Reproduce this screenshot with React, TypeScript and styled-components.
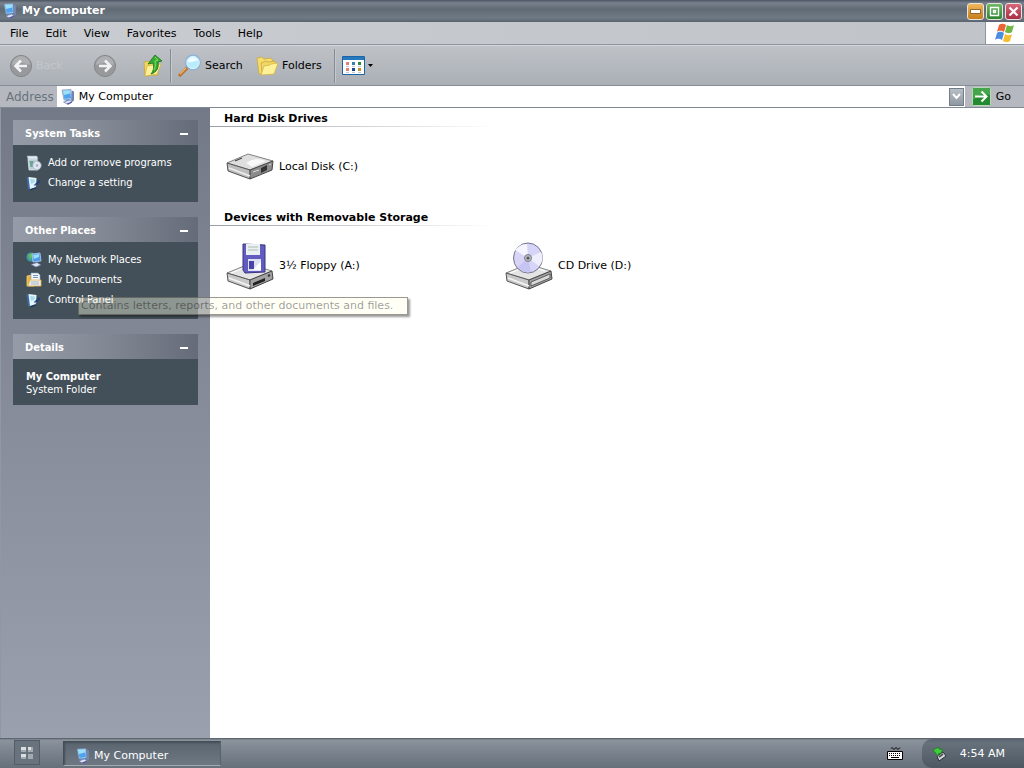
import { FC, ReactNode } from "react";
import styled, { createGlobalStyle } from "styled-components";

// types
interface IPanelLink {
  label: string;
  icon: ReactNode;
}

interface IDrive {
  label: string;
  icon: ReactNode;
}

// css
const GlobalStyle = createGlobalStyle`
  * {
    box-sizing: border-box;
  }
  body {
    margin: 0;
    font-family: Verdana, "DejaVu Sans", sans-serif;
    font-size: 11px;
    line-height: 14px;
    color: #000;
  }
  button, input {
    font: inherit;
    color: inherit;
  }
  button {
    background: none;
    border: 0;
    padding: 0;
  }
  svg {
    display: block;
    flex: none;
  }
`;

const Desktop = styled.div`
  display: flex;
  flex-direction: column;
  min-height: 100vh;
`;

const TitleBar = styled.header`
  align-items: center;
  background: linear-gradient(#4c5663, #78818c 3px, #606a75 9px, #707a84 18px, #596370);
  color: white;
  display: flex;
  height: 22px;
  padding: 0 2px 0 2px;
`;

const Title = styled.h1`
  flex: 1;
  font-size: 11px;
  margin: 0 0 0 4px;
`;

const WindowButton = styled.button<{ $from: string; $to: string }>`
  align-items: center;
  background: linear-gradient(${({ $from, $to }) => `${$from}, ${$to}`});
  border: 1px solid #e8e4dc;
  border-radius: 3px;
  display: flex;
  height: 17px;
  justify-content: center;
  margin-left: 2px;
  width: 17px;
`;

const MenuBar = styled.nav`
  background: linear-gradient(90deg, #c9ccd1, #c0c4c9);
  border-bottom: 1px solid #8d959e;
  display: flex;
  height: 23px;
`;

const Menus = styled.div`
  display: flex;
  flex: 1;
  gap: 1px;
  padding-left: 2px;
`;

const MenuItem = styled.button`
  padding: 1px 8px 0;
`;

const Brand = styled.div`
  align-items: center;
  background: white;
  border-left: 1px solid #8d959e;
  display: flex;
  justify-content: center;
  width: 39px;
`;

const ToolBar = styled.div`
  align-items: center;
  background: linear-gradient(#bfc3c8, #aaafb5);
  border-bottom: 1px solid #858e97;
  border-top: 1px solid #d3d6da;
  display: flex;
  height: 41px;
  padding: 0 9px;
`;

const ToolButton = styled.button<{ $width?: number }>`
  align-items: center;
  display: flex;
  gap: 3px;
  text-align: left;
  width: ${({ $width }) => ($width ? `${$width}px` : "auto")};

  &:disabled {
    color: #c3c7cb;
  }
`;

const Separator = styled.div`
  border-left: 1px solid #858c95;
  border-right: 1px solid #c5c9ce;
  height: 34px;
  margin: 0 6px 0 7px;
`;

const AddressBar = styled.form`
  align-items: center;
  background: #b5b9bf;
  border-bottom: 1px solid #808993;
  display: flex;
  height: 22px;
`;

const AddressLabel = styled.label`
  color: #69727d;
  font-size: 12px;
  padding: 0 3px 0 6px;
`;

const AddressField = styled.div`
  align-items: center;
  background: white;
  display: flex;
  flex: 1;
  gap: 3px;
  height: 21px;
  padding: 0 1px 0 3px;
`;

const AddressInput = styled.input`
  border: 0;
  flex: 1;
  min-width: 0;
  outline: 0;
  padding: 1px 0 0;
`;

const DropButton = styled.button`
  align-items: center;
  background: linear-gradient(#b8bec5, #8f98a2);
  border: 1px solid #737d88;
  display: flex;
  height: 18px;
  justify-content: center;
  width: 15px;
`;

const GoButton = styled.button`
  align-items: center;
  display: flex;
  gap: 5px;
  padding: 0 13px 0 7px;
`;

const Content = styled.div`
  display: flex;
  flex: 1;
`;

const SideBar = styled.aside`
  background: linear-gradient(#737986, #858b98 45%, #9aa0ae);
  border-left: 1px solid #9298a3;
  display: flex;
  flex: none;
  flex-direction: column;
  gap: 15px;
  padding: 12px;
  width: 210px;
`;

const Panel = styled.section`
  color: white;
  font-family: Tahoma, "DejaVu Sans Condensed", "DejaVu Sans", sans-serif;
`;

const PanelHeader = styled.header`
  align-items: center;
  background: linear-gradient(90deg, #969ca7, #858b96 45%, #656b78);
  display: flex;
  height: 25px;
  justify-content: space-between;
  padding: 2px 10px 0 12px;
`;

const PanelTitle = styled.h2`
  font-size: 11px;
  margin: 0;
`;

const Collapse = styled.button`
  background: white;
  height: 2px;
  width: 8px;
`;

const PanelBody = styled.div`
  background: #435059;
  padding: 8px 13px 9px;
  position: relative;
`;

const PanelLink = styled.a`
  align-items: center;
  color: inherit;
  display: flex;
  gap: 6px;
  height: 20px;
  text-decoration: none;
`;

const DetailText = styled.p`
  line-height: 13px;
  margin: 0;

  &:first-child {
    font-weight: bold;
    padding-top: 3px;
  }
`;

const Tooltip = styled.div`
  background: rgba(255, 255, 232, 0.4);
  border: 1px solid rgba(70, 70, 60, 0.55);
  box-shadow: 2px 2px 2px rgba(0, 0, 0, 0.4);
  color: rgba(0, 0, 0, 0.4);
  font-family: Verdana, "DejaVu Sans", sans-serif;
  height: 18px;
  left: 65px;
  line-height: 16px;
  min-width: 330px;
  padding: 0 2px;
  position: absolute;
  top: 55px;
  white-space: nowrap;
  z-index: 1;
`;

const Main = styled.main`
  background: white;
  flex: 1;
`;

const GroupTitle = styled.h2`
  font-size: 11px;
  height: 19px;
  line-height: 21px;
  margin: 0;
  padding-left: 14px;
  background: linear-gradient(90deg, #9a9fa7, white) bottom left / 285px 1px no-repeat;
`;

const DriveGrid = styled.div`
  display: grid;
  grid-template-columns: repeat(auto-fill, 279px);
  height: 80px;
  padding-left: 16px;
`;

const Drive = styled.button`
  align-items: center;
  display: flex;
  gap: 5px;
  text-align: left;
`;

const TaskBar = styled.footer`
  align-items: stretch;
  background: linear-gradient(#4e5863, #8b949c 2px, #7d8690 12px, #66707a);
  color: white;
  display: flex;
  height: 30px;
`;

const StartButton = styled.button`
  align-items: center;
  background: #69737d;
  border: 1px solid #525d67;
  display: flex;
  height: 25px;
  justify-content: center;
  margin: 2px 23px 0 14px;
  width: 26px;
`;

const TaskButton = styled.button`
  align-items: center;
  background: linear-gradient(#5b6570, #6e7882);
  border: 1px solid #444e58;
  border-bottom-color: #a4abb2;
  border-right-color: #59636e;
  box-shadow: inset 1px 1px 2px #444e58;
  display: flex;
  gap: 3px;
  height: 25px;
  margin-top: 3px;
  padding: 4px 11px 0;
  width: 158px;
`;

const Keyboard = styled.button`
  margin: 0 19px 0 auto;
`;

const Tray = styled.div`
  align-items: center;
  background: linear-gradient(#5b6571, #66717c 4px, #4d5863);
  border-radius: 10px 0 0 10px;
  display: flex;
  gap: 12px;
  margin-top: 1px;
  padding: 0 19px 0 10px;
`;

// icons
const ComputerIcon: FC = () => (
  <svg width="16" height="16" viewBox="0 0 16 16">
    <path d="M2 1l9-.5 1 9.500-8 1z" fill="#b9d4ee" stroke="#6b84a8" strokeWidth=".6" />
    <path d="M3 2l7-.5 1 7.500-6.500 1z" fill="#4fa3ee" />
    <path d="M3 2l7-.5v3L4 6z" fill="#9be0fb" />
    <path d="M12 1.500l2 1v9l-3 2.500z" fill="#7386b0" />
    <path d="M5 11l4-1 2 2-4 1z" fill="#6aa6e4" />
    <path d="M3.500 13l6-2 2.500 2-4 2.500z" fill="#dfe3f2" stroke="#5266a0" strokeWidth=".6" />
    <path d="M7 14.500l4-1.500 1 .5-4 2z" fill="#4a4a9a" />
  </svg>
);

const FlagIcon: FC = () => (
  <svg width="22" height="20" viewBox="0 0 22 20">
    <path d="M5 2c3-2 5-1 7 0l-2 7c-2-1-4-2-7 0z" fill="#eb6438" />
    <path d="M13 2c2 1 4 2 7 0l-2 7c-3 2-5 1-7 0z" fill="#70b843" />
    <path d="M3 10c3-2 5-1 7 0l-2 7c-2-1-4-2-7 0z" fill="#4b8dde" />
    <path d="M11 11c2 1 4 2 7 0l-2 7c-3 2-5 1-7 0z" fill="#f4bf32" />
  </svg>
);

const ArrowIcon: FC<{ forward?: boolean }> = ({ forward }) => (
  <svg width="24" height="24" viewBox="0 0 24 24">
    <circle cx="12" cy="12" r="10.600" fill="#97999b" stroke="#85888b" />
    <path d="M3 11a9 9 0 0 1 18 0q-9-4-18 0z" fill="#adafb1" />
    <path
      d={forward ? "M6 12h11M12 6.500l5.500 5.500-5.500 5.500" : "M18 12H7M12 6.500L6.500 12l5.500 5.500"}
      fill="none"
      stroke="#f1f2f3"
      strokeWidth="2.600"
    />
  </svg>
);

const UpIcon: FC = () => (
  <svg width="20" height="24" viewBox="0 0 20 24">
    <path d="M1 8l5-1 2 2 6-1 1 3v10l-13 1z" fill="#f0d660" stroke="#c4a23c" strokeWidth=".7" />
    <path d="M4 12l14-2-4 10-12 2z" fill="#fff09a" stroke="#d2b448" strokeWidth=".7" />
    <path d="M12 1l7 6-4 1c1 6-1 10-7 12 3-4 3-7 2-11l-5 1z" fill="#36ad2e" stroke="#166f1c" strokeWidth=".8" />
    <path d="M12 3l3 3-3 1c1 4 0 7-1 9" fill="none" stroke="#83dc66" />
  </svg>
);

const SearchIcon: FC = () => (
  <svg width="24" height="24" viewBox="0 0 24 24">
    <path d="M2 21l7-7" stroke="#b87434" strokeWidth="3.200" strokeLinecap="round" />
    <path d="M2 20l6-6" stroke="#f2b878" strokeWidth="1.300" />
    <circle cx="15" cy="8.500" r="7.300" fill="#b9ecfb" stroke="#8fb0d6" strokeWidth="1.500" />
    <path d="M10 8c0-6 9-6 10-1-3-1-5 2-10 1z" fill="#effdff" />
    <circle cx="15" cy="8.500" r="6.200" fill="none" stroke="#e4f6ff" strokeWidth=".8" />
  </svg>
);

const FolderIcon: FC = () => (
  <svg width="23" height="20" viewBox="0 0 23 20">
    <path d="M1 2l5-1 2 2 7-1 2 3-3 12-11 1z" fill="#f5dc6c" stroke="#cbaa44" strokeWidth=".8" />
    <path d="M5 7l5-2 2 1 7-1 1 2-2 11H6z" fill="#f1d662" stroke="#c8a842" strokeWidth=".8" />
    <path d="M8 10l6-1 1-1 7-1-4 11-13 1z" fill="#fff197" stroke="#d2b750" strokeWidth=".8" />
  </svg>
);

const ViewsIcon: FC = () => (
  <svg width="32" height="20" viewBox="0 0 32 20">
    <path d="M.5.500h22v18H.500z" fill="#fff" stroke="#1a65a8" />
    <path d="M1 1h21v3H1z" fill="#2779bd" />
    <path d="M4 6h3v3H4zM4 12h3v3H4z" fill="#e08070" />
    <path d="M10 6h3v3h-3z" fill="#3680b0" />
    <path d="M16 6h3v3h-3z" fill="#2c8a48" />
    <path d="M10 12h3v3h-3z" fill="#17478f" />
    <path d="M16 12h3v3h-3z" fill="#bd912c" />
    <path d="M4 10.500h3M10 10.500h3M16 10.500h3M4 16.500h3M10 16.500h3M16 16.500h3" stroke="#c2c9d0" />
    <path d="M26 8h5l-2.500 3z" fill="#000" />
  </svg>
);

const GoIcon: FC = () => (
  <svg width="19" height="19" viewBox="0 0 19 19">
    <rect x=".5" y=".5" width="18" height="18" rx="1" fill="#238a30" stroke="#b8d8b9" />
    <path d="M1 1h17v7Q9 5 1 13z" fill="#5ab75c" opacity=".6" />
    <path d="M3 9.500h11M9.500 4.500l5 5-5 5" fill="none" stroke="#fff" strokeWidth="2" />
  </svg>
);

const ProgramsIcon: FC = () => (
  <svg width="16" height="16" viewBox="0 0 16 16">
    <path d="M1 1h10l1 3H2z" fill="#e4ebf2" stroke="#8ea0ae" strokeWidth=".6" />
    <path d="M2 4h9l1 11H3z" fill="#bccfd8" stroke="#dce8eb" strokeWidth=".8" />
    <path d="M3.500 6h4v6h-3z" fill="#6aa690" />
    <circle cx="11" cy="10.500" r="4.200" fill="#dfe4f2" stroke="#a9b2c6" strokeWidth=".7" />
    <circle cx="11" cy="10.500" r="1.200" fill="#a0abc4" />
  </svg>
);

const SettingIcon: FC = () => (
  <svg width="16" height="16" viewBox="0 0 16 16">
    <path d="M.5 2L4 3v12l-2-1z" fill="#3a6aa8" />
    <path d="M2.500 2l8 1-.5 9-6 2z" fill="#e6f4fb" />
    <path d="M4 4l5 .5-.5 3L5 9z" fill="#a5dcec" />
    <path d="M8.500 10.500L14 6" stroke="#1f3e7c" strokeWidth="1.800" />
    <path d="M8 9.500l2 1.500" stroke="#7fa4dc" strokeWidth="1.500" />
    <path d="M4 15l6-2" stroke="#17365e" strokeWidth="1.200" />
  </svg>
);

const NetworkIcon: FC = () => (
  <svg width="16" height="16" viewBox="0 0 16 16">
    <circle cx="5" cy="5" r="4.500" fill="#3c9ba8" />
    <path d="M2 3l4-2 1 3-3 4z" fill="#65b85e" />
    <path d="M6 2l8-1 1 8-8 1z" fill="#4c99e9" stroke="#b4cef0" strokeWidth=".8" />
    <path d="M7 3l6-1v3L8 7z" fill="#9cdcfa" />
    <path d="M5 12.500l6-2 4 2.500-5 2z" fill="#dce3f2" stroke="#5f72a8" strokeWidth=".6" />
  </svg>
);

const DocumentsIcon: FC = () => (
  <svg width="16" height="16" viewBox="0 0 16 16">
    <path d="M1 4l5-1 2 2v9H1z" fill="#e4b446" stroke="#f5d36e" strokeWidth=".8" />
    <path d="M5 1h7l2 2v9H5z" fill="#f3f7fc" stroke="#839cbc" strokeWidth=".6" />
    <path d="M7 3.500h5M7 5.500h5" stroke="#7293bc" />
    <path d="M4 8h11v6H2z" fill="#e9edf2" stroke="#eab53f" strokeWidth=".8" />
    <path d="M5 10h8M5 12h8" stroke="#a9b7c8" />
  </svg>
);

const DriveBox: FC = () => (
  <g strokeLinejoin="round">
    <path d="M1 31l22-9 23 7-22 9z" fill="#e4e4e4" stroke="#888" />
    <path d="M1 31l23 7v9L2 39z" fill="#c9c9c9" stroke="#555" />
    <path d="M24 38l22-9 1 8-23 10z" fill="#a2a2a2" stroke="#444" />
    <path d="M3 36l21 8" stroke="#f5f5f5" strokeWidth="1.500" />
    <path d="M5 31l18-7 17 5" fill="none" stroke="#fff" />
  </g>
);

const HardDiskIcon: FC = () => (
  <svg width="48" height="48" viewBox="0 0 48 48">
    <g strokeLinejoin="round">
      <path d="M1 20l21-9 25 7-23 9z" fill="#dedede" stroke="#828282" />
      <path d="M1 20l23 7v9L2 28z" fill="#bdbdbd" stroke="#555" />
      <path d="M24 27l23-9-1 9-22 9z" fill="#8b8b8b" stroke="#484848" />
      <path d="M20 20q9-7 20-2l-14 6z" fill="#f8f8f8" />
      <path d="M3 25l21 8" stroke="#eee" strokeWidth="1.500" />
      <path d="M9 18l7-3" stroke="#444" strokeWidth="1.200" />
      <path d="M35 25l6-3v5l-6 3z" fill="#333" />
      <path d="M27 29l6-2M43 22l2-1" stroke="#ddd" />
    </g>
  </svg>
);

const FloppyIcon: FC = () => (
  <svg width="48" height="48" viewBox="0 0 48 48">
    <DriveBox />
    <path d="M17 2l22 1v27l-20 1-2-3z" fill="#625cc0" stroke="#37337e" />
    <path d="M20 2h14v11H20z" fill="#eaf0f1" />
    <path d="M22 5h10M22 8h10" stroke="#aebdb8" />
    <path d="M22 17h13v12H22z" fill="#dce1f2" />
    <path d="M23 19h5v8h-5z" fill="#4b44a8" />
    <path d="M27 28l8-9v9z" fill="#fff" />
    <path d="M27 41l12-5v3l-12 5z" fill="#222" />
    <path d="M42 34l2-1" stroke="#333" strokeWidth="2" />
  </svg>
);

const CdIcon: FC = () => (
  <svg width="48" height="48" viewBox="0 0 48 48">
    <DriveBox />
    <path d="M26 40l19-8v4l-19 8z" fill="#dadada" stroke="#444" strokeWidth=".8" />
    <ellipse cx="23" cy="16" rx="14.500" ry="15" fill="#d7d5f7" stroke="#73738a" />
    <path d="M23 16L10 8q5-6 12-6z" fill="#f5f5ff" />
    <path d="M23 16l13-6q4 8-2 14z" fill="#eeeefc" />
    <path d="M23 16l3 14q-8 2-13-5z" fill="#c6c4f2" />
    <circle cx="23" cy="16" r="3.500" fill="#b9bbc5" stroke="#7c7d88" />
    <circle cx="23" cy="16" r="1.500" fill="#555" />
  </svg>
);

const KeyboardIcon: FC = () => (
  <svg width="16" height="14" viewBox="0 0 16 14">
    <path d="M4 2.500l1-1 2 2 2-2 2 2 2-2" fill="none" stroke="#000" />
    <path d="M.5 5.500h15v8H.500z" fill="#fff" stroke="#000" />
    <path d="M2 7.500h12M2 9.500h12" stroke="#000" strokeDasharray="1 1" />
    <path d="M4 11.500h8" stroke="#000" />
  </svg>
);

const TrayIcon: FC = () => (
  <svg width="16" height="16" viewBox="0 0 16 16">
    <path d="M5 10l6-4 3 4-7 5z" fill="#d6dadd" stroke="#29333b" />
    <path d="M7 11l4-3" stroke="#555" strokeWidth="2" />
    <path d="M1 4l6-3v2l4 1-3 4-1-1-1 3z" fill="#41cc39" stroke="#167b20" strokeWidth=".7" />
  </svg>
);

const menus = ["File", "Edit", "View", "Favorites", "Tools", "Help"];

const systemTasks: IPanelLink[] = [
  { label: "Add or remove programs", icon: <ProgramsIcon /> },
  { label: "Change a setting", icon: <SettingIcon /> },
];

const otherPlaces: IPanelLink[] = [
  { label: "My Network Places", icon: <NetworkIcon /> },
  { label: "My Documents", icon: <DocumentsIcon /> },
  { label: "Control Panel", icon: <SettingIcon /> },
];

const hardDisks: IDrive[] = [{ label: "Local Disk (C:)", icon: <HardDiskIcon /> }];

const removable: IDrive[] = [
  { label: "3½ Floppy (A:)", icon: <FloppyIcon /> },
  { label: "CD Drive (D:)", icon: <CdIcon /> },
];

const TaskPanel: FC<{ title: string; children: ReactNode }> = ({ title, children }) => (
  <Panel>
    <PanelHeader>
      <PanelTitle>{title}</PanelTitle>
      <Collapse aria-label={`Collapse ${title}`} />
    </PanelHeader>
    <PanelBody>{children}</PanelBody>
  </Panel>
);

const PanelLinks: FC<{ links: IPanelLink[] }> = ({ links }) => (
  <>
    {links.map(({ label, icon }) => (
      <PanelLink href="#" key={label}>
        {icon}
        {label}
      </PanelLink>
    ))}
  </>
);

const DriveGroup: FC<{ title: string; drives: IDrive[] }> = ({ title, drives }) => (
  <section>
    <GroupTitle>{title}</GroupTitle>
    <DriveGrid>
      {drives.map(({ label, icon }) => (
        <Drive key={label}>
          {icon}
          {label}
        </Drive>
      ))}
    </DriveGrid>
  </section>
);

const App: FC = () => {
  return (
    <Desktop>
      <GlobalStyle />
      <TitleBar>
        <ComputerIcon />
        <Title>My Computer</Title>
        <WindowButton $from="#efb85c" $to="#c57d1b" aria-label="Minimize">
          <svg width="11" height="11">
            <path d="M.5 3.500h10v4H.500z" fill="#fff" stroke="#7a4f18" strokeWidth=".8" />
          </svg>
        </WindowButton>
        <WindowButton $from="#6dbb64" $to="#2e8431" aria-label="Restore">
          <svg width="11" height="11">
            <path d="M1.500 1.500h8v8h-8zM4.500 4.500h2v2h-2z" fill="none" stroke="#fff" strokeWidth="1.400" />
          </svg>
        </WindowButton>
        <WindowButton $from="#d9677c" $to="#a72e46" aria-label="Close">
          <svg width="11" height="11">
            <path d="M1.500 1.500l8 8M9.500 1.500l-8 8" stroke="#fff" strokeWidth="2.200" />
          </svg>
        </WindowButton>
      </TitleBar>
      <MenuBar>
        <Menus>
          {menus.map((menu) => (
            <MenuItem key={menu}>{menu}</MenuItem>
          ))}
        </Menus>
        <Brand>
          <FlagIcon />
        </Brand>
      </MenuBar>
      <ToolBar>
        <ToolButton $width={84} disabled>
          <ArrowIcon />
          Back
        </ToolButton>
        <ToolButton $width={50} disabled aria-label="Forward">
          <ArrowIcon forward />
        </ToolButton>
        <ToolButton aria-label="Up">
          <UpIcon />
        </ToolButton>
        <Separator />
        <ToolButton $width={78}>
          <SearchIcon />
          Search
        </ToolButton>
        <ToolButton $width={71}>
          <FolderIcon />
          Folders
        </ToolButton>
        <Separator />
        <ToolButton aria-label="Views">
          <ViewsIcon />
        </ToolButton>
      </ToolBar>
      <AddressBar onSubmit={(e) => e.preventDefault()}>
        <AddressLabel htmlFor="address">Address</AddressLabel>
        <AddressField>
          <ComputerIcon />
          <AddressInput id="address" defaultValue="My Computer" />
          <DropButton type="button" aria-label="Show addresses">
            <svg width="9" height="7">
              <path d="M1 1l3.500 4L8 1" fill="none" stroke="#fff" strokeWidth="2" />
            </svg>
          </DropButton>
        </AddressField>
        <GoButton type="submit">
          <GoIcon />
          Go
        </GoButton>
      </AddressBar>
      <Content>
        <SideBar>
          <TaskPanel title="System Tasks">
            <PanelLinks links={systemTasks} />
          </TaskPanel>
          <TaskPanel title="Other Places">
            <PanelLinks links={otherPlaces} />
            <Tooltip role="tooltip">
              Contains letters, reports, and other documents and files.
            </Tooltip>
          </TaskPanel>
          <TaskPanel title="Details">
            <DetailText>My Computer</DetailText>
            <DetailText>System Folder</DetailText>
          </TaskPanel>
        </SideBar>
        <Main>
          <DriveGroup title="Hard Disk Drives" drives={hardDisks} />
          <DriveGroup title="Devices with Removable Storage" drives={removable} />
        </Main>
      </Content>
      <TaskBar>
        <StartButton aria-label="Start">
          <svg width="14" height="12">
            <path d="M1 0h5v5H1zM8 0h5v5H8zM1 7h5v5H1zM8 7h5v5H8z" fill="#a3abb1" />
            <path d="M1 0h5v3H1zM1 7h5v3H1zM8 0h3v3H8z" fill="#dde0e2" />
          </svg>
        </StartButton>
        <TaskButton>
          <ComputerIcon />
          My Computer
        </TaskButton>
        <Keyboard aria-label="Keyboard">
          <KeyboardIcon />
        </Keyboard>
        <Tray>
          <TrayIcon />
          <time>4:54 AM</time>
        </Tray>
      </TaskBar>
    </Desktop>
  );
};

export default App;
